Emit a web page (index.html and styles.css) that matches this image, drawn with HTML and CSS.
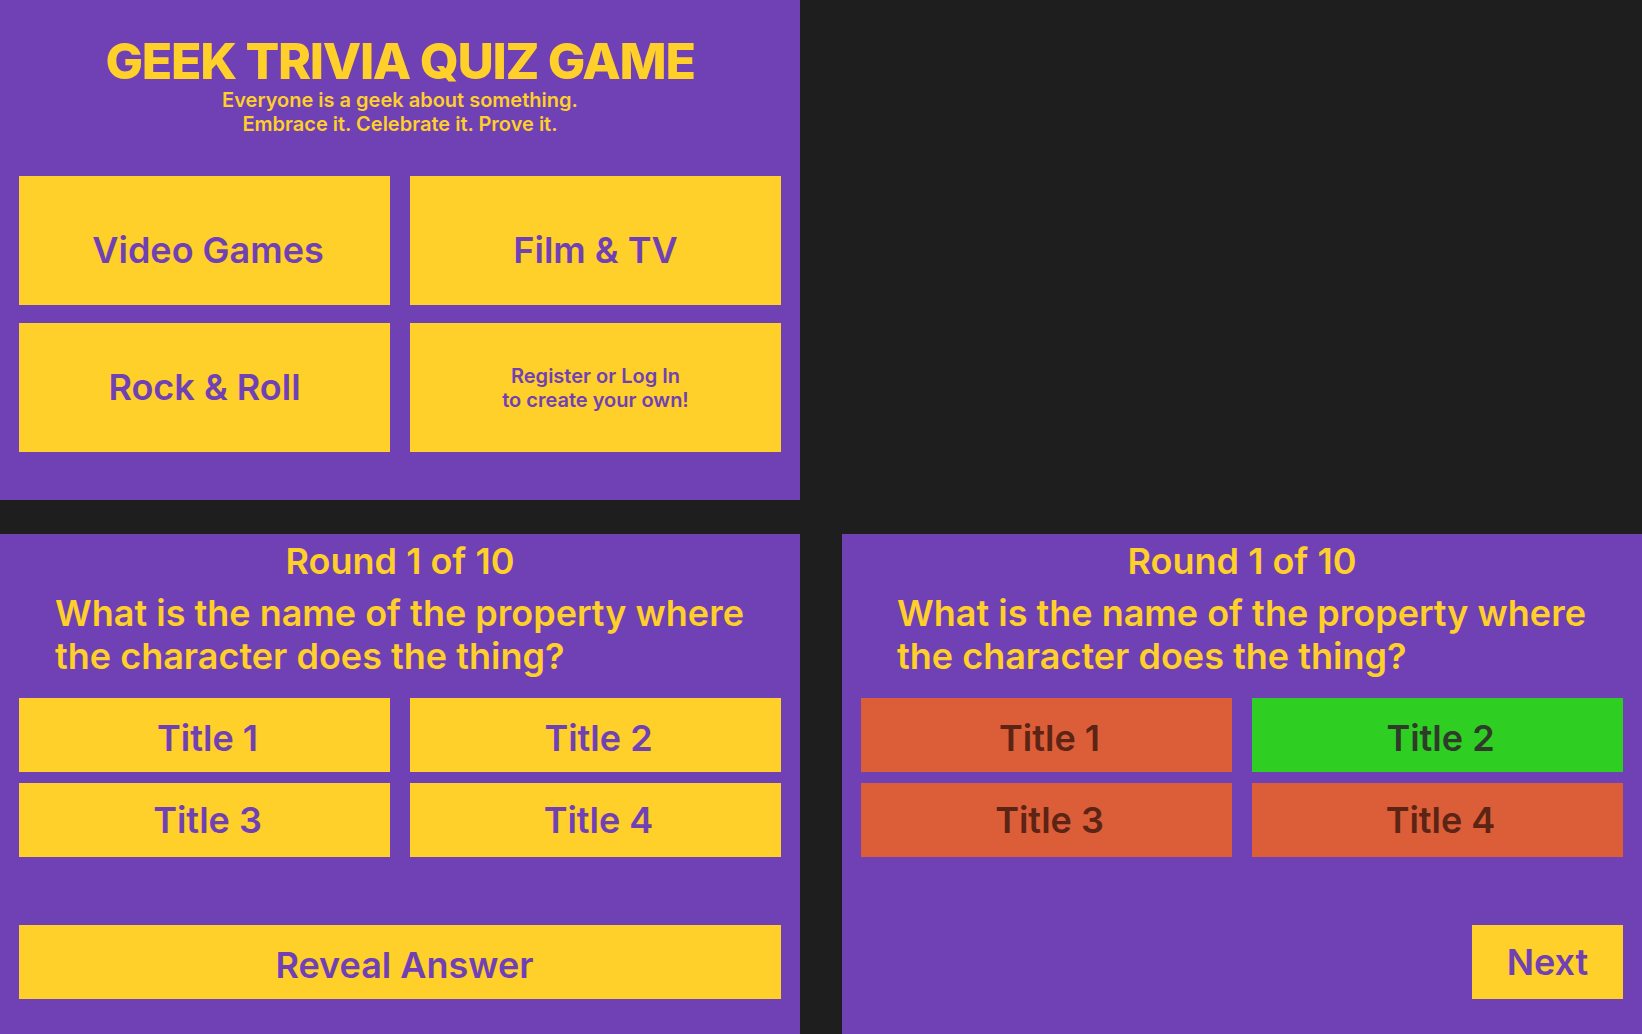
FILE: index.html
```html
<!DOCTYPE html>
<html lang="en">
<head>
<meta charset="utf-8">
<title>Geek Trivia Quiz Game</title>
<link rel="stylesheet" href="styles.css">
</head>
<body>
<main class="canvas">
  <section class="frame home">
    <h1 class="home-title">GEEK TRIVIA QUIZ GAME</h1>
    <p class="home-tagline">Everyone is a geek about something.<br>Embrace it. Celebrate it. Prove it.</p>
    <div class="category-grid">
      <button class="tile tile-low tile-nudge">Video Games</button>
      <button class="tile tile-low">Film &amp; TV</button>
      <button class="tile">Rock &amp; Roll</button>
      <button class="tile tile-small">Register or Log In<br>to create your own!</button>
    </div>
  </section>

  <div class="empty"></div>

  <section class="frame round">
    <h2 class="round-count">Round 1 of 10</h2>
    <p class="question">What is the name of the property where the character does the thing?</p>
    <div class="answer-grid">
      <button class="answer answer-low">Title 1</button>
      <button class="answer answer-low">Title 2</button>
      <button class="answer">Title 3</button>
      <button class="answer">Title 4</button>
    </div>
    <div class="round-footer">
      <button class="action action-wide action-low">Reveal Answer</button>
    </div>
  </section>

  <section class="frame round">
    <h2 class="round-count">Round 1 of 10</h2>
    <p class="question">What is the name of the property where the character does the thing?</p>
    <div class="answer-grid">
      <button class="answer answer-low wrong">Title 1</button>
      <button class="answer answer-low right">Title 2</button>
      <button class="answer wrong">Title 3</button>
      <button class="answer wrong">Title 4</button>
    </div>
    <div class="round-footer footer-end">
      <button class="action action-next">Next</button>
    </div>
  </section>
</main>
</body>
</html>
```

FILE: styles.css
```css
* { box-sizing: border-box; }

html, body {
  margin: 0;
  padding: 0;
  background: #1e1e1e;
  height: 100%;
  overflow: hidden;
}

body {
  font-family: Inter, "Noto Sans", "Liberation Sans", sans-serif;
  color: #ffcf2a;
}

.canvas {
  display: grid;
  grid-template-columns: 800px 800px;
  grid-template-rows: 500px 500px;
  column-gap: 42px;
  row-gap: 34px;
}

.frame {
  background: #6f41b5;
  display: flex;
  flex-direction: column;
}

/* ---------- home ---------- */
.home {
  padding: 34px 19px 0;
  align-items: stretch;
}

.home-title {
  margin: 0;
  font-size: 50px;
  line-height: 54px;
  font-weight: 800;
  letter-spacing: -1.3px;
  text-align: center;
  color: #ffcf2a;
}

.home-tagline {
  margin: 0;
  font-size: 20px;
  line-height: 24px;
  font-weight: 600;
  text-align: center;
}

.category-grid {
  margin-top: 40px;
  display: grid;
  grid-template-columns: 371px 371px;
  grid-auto-rows: 129px;
  column-gap: 20px;
  row-gap: 18px;
}

button {
  font-family: inherit;
  border: 0;
  margin: 0;
  padding: 0;
  cursor: pointer;
}

.tile {
  background: #ffcf2a;
  color: #6f41b5;
  font-size: 36px;
  line-height: 43px;
  font-weight: 600;
  display: flex;
  align-items: center;
  justify-content: center;
  text-align: center;
}

.tile-low { padding-top: 19px; }
.tile-nudge { padding-left: 7px; }

.tile-small {
  font-size: 20px;
  line-height: 24px;
}

/* ---------- round ---------- */
.round {
  padding: 6px 19px 35px;
}

.round-count {
  margin: 0;
  font-size: 36px;
  line-height: 43px;
  font-weight: 600;
  text-align: center;
}

.question {
  margin: 9px 0 0;
  padding: 0 20px 0 36px;
  font-size: 36px;
  line-height: 43.2px;
  font-weight: 600;
}

.answer-grid {
  margin-top: 20px;
  display: grid;
  grid-template-columns: 371px 371px;
  grid-auto-rows: 74px;
  column-gap: 20px;
  row-gap: 11px;
}

.answer {
  background: #ffcf2a;
  color: #6f41b5;
  font-size: 36px;
  line-height: 43px;
  font-weight: 600;
  display: flex;
  align-items: center;
  justify-content: center;
  padding-left: 6px;
}

.answer-low { padding-top: 7px; }

.answer.wrong {
  background: #db5e38;
  color: #5c2414;
}

.answer.right {
  background: #2ecf22;
  color: #2f3a2b;
}

.round-footer {
  margin-top: auto;
  display: flex;
}

.footer-end { justify-content: flex-end; }

.action {
  height: 74px;
  background: #ffcf2a;
  color: #6f41b5;
  font-size: 36px;
  line-height: 43px;
  font-weight: 600;
  display: flex;
  align-items: center;
  justify-content: center;
}

.action-next { width: 151px; }
.action-wide { width: 100%; padding-left: 9px; }
.action-low { padding-top: 7px; }
```
